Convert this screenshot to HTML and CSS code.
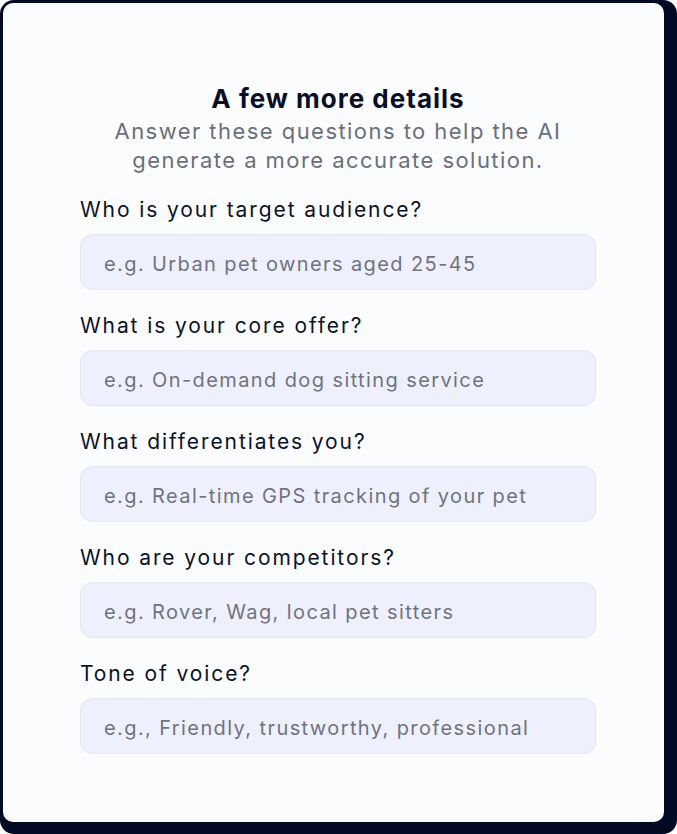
FILE: index.html
```html
<!DOCTYPE html>
<html lang="en">
<head>
<meta charset="utf-8">
<title>A few more details</title>
<link rel="stylesheet" href="styles.css">
</head>
<body>
<div class="frame">
  <div class="card">
    <form class="form">
      <header class="head">
        <h1 class="title">A few more details</h1>
        <p class="subtitle">Answer these questions to help the AI generate a more accurate solution.</p>
      </header>
      <div class="field">
        <label class="label" for="q1">Who is your target audience?</label>
        <input class="input" id="q1" type="text" placeholder="e.g. Urban pet owners aged 25-45">
      </div>
      <div class="field">
        <label class="label" for="q2">What is your core offer?</label>
        <input class="input" id="q2" type="text" placeholder="e.g. On-demand dog sitting service">
      </div>
      <div class="field">
        <label class="label" for="q3">What differentiates you?</label>
        <input class="input" id="q3" type="text" placeholder="e.g. Real-time GPS tracking of your pet">
      </div>
      <div class="field">
        <label class="label" for="q4">Who are your competitors?</label>
        <input class="input" id="q4" type="text" placeholder="e.g. Rover, Wag, local pet sitters">
      </div>
      <div class="field">
        <label class="label" for="q5">Tone of voice?</label>
        <input class="input" id="q5" type="text" placeholder="e.g., Friendly, trustworthy, professional">
      </div>
    </form>
  </div>
</div>
</body>
</html>
```
FILE: styles.css
```css
* { box-sizing: border-box; }
html, body { margin: 0; padding: 0; }
body {
  width: 677px;
  height: 834px;
  font-family: Inter, "Noto Sans", sans-serif;
  background: #ffffff;
}
.frame {
  width: 677px;
  height: 834px;
  background: #030a24;
  border-radius: 14px;
  padding: 3px 13px 12px 3px;
}
.card {
  width: 100%;
  height: 100%;
  background: #fbfcfe;
  border-radius: 10px;
  padding: 80px 0 0 77px;
}
.form {
  width: 516px;
  display: flex;
  flex-direction: column;
  gap: 22px;
}
.head {
  display: flex;
  flex-direction: column;
  align-items: center;
  text-align: center;
  gap: 2px;
  margin-bottom: -1px;
}
.title {
  margin: 0;
  font-size: 26px;
  line-height: 32px;
  font-weight: 700;
  letter-spacing: 1px;
  color: #0a0f29;
}
.subtitle {
  margin: 0;
  font-size: 22px;
  line-height: 29px;
  letter-spacing: 1.45px;
  color: #6b6f7b;
  width: 516px;
}
.field {
  display: flex;
  flex-direction: column;
  gap: 10px;
}
.label {
  font-size: 21px;
  line-height: 28px;
  letter-spacing: 1.9px;
  color: #0c1226;
}
.input {
  height: 56px;
  width: 516px;
  border: 1px solid #e5e7ee;
  border-radius: 12px;
  background: #eef1fd;
  padding: 3px 23px 0;
  font-family: Inter, "Noto Sans", sans-serif;
  font-size: 20px;
  letter-spacing: 1.4px;
  color: #0c1226;
  outline: none;
}
.input::placeholder {
  color: #70737d;
  opacity: 1;
}
```
